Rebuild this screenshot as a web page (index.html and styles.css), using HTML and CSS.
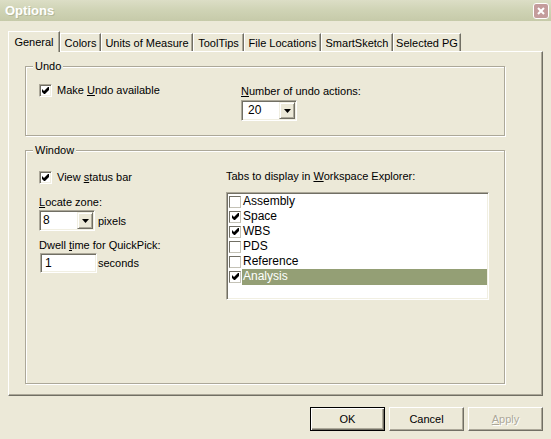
FILE: index.html
```html
<!DOCTYPE html>
<html>
<head>
<meta charset="utf-8">
<link rel="stylesheet" href="styles.css">
</head>
<body>
<div class="titlebar">
  <span class="title">Options</span>
  <span class="close"><svg width="8" height="8" viewBox="0 0 8 8"><path d="M1 1L7 7M7 1L1 7" stroke="#fff" stroke-width="2"/></svg></span>
</div>
<div class="main">
  <div class="tabs">
    <div class="tab active t-general">General</div>
    <div class="tab t-colors">Colors</div>
    <div class="tab t-units">Units of Measure</div>
    <div class="tab t-tips">ToolTips</div>
    <div class="tab t-files">File Locations</div>
    <div class="tab t-sketch">SmartSketch</div>
    <div class="tab t-pg">Selected PG</div>
  </div>
  <div class="panel">
    <div class="group undo">
      <span class="legend">Undo</span>
      <div class="undo-inner">
        <div class="undo-left">
          <div class="check-row">
            <span class="checkbox"><svg class="tick" width="7" height="7" viewBox="0 0 7 7"><polygon points="0,2 2,4 6,0 7,0 7,3 3,7 2,7 0,5" fill="#000"/></svg></span>
            <span>Make <u>U</u>ndo available</span>
          </div>
        </div>
        <div class="undo-right">
          <div class="field-label"><u>N</u>umber of undo actions:</div>
          <div class="combo combo-undo">
            <span class="combo-value wide">20</span>
            <span class="drop"><svg width="7" height="4" viewBox="0 0 7 4"><polygon points="0,0 7,0 3.5,4" fill="#000"/></svg></span>
          </div>
        </div>
      </div>
    </div>
    <div class="group window">
      <span class="legend">Window</span>
      <div class="window-inner">
        <div class="win-left">
          <div class="check-row">
            <span class="checkbox"><svg class="tick" width="7" height="7" viewBox="0 0 7 7"><polygon points="0,2 2,4 6,0 7,0 7,3 3,7 2,7 0,5" fill="#000"/></svg></span>
            <span>View <u>s</u>tatus bar</span>
          </div>
          <div class="field-label locate-label"><u>L</u>ocate zone:</div>
          <div class="field-row">
            <div class="combo">
              <span class="combo-value">8</span>
              <span class="drop"><svg width="7" height="4" viewBox="0 0 7 4"><polygon points="0,0 7,0 3.5,4" fill="#000"/></svg></span>
            </div>
            <span class="unit">pixels</span>
          </div>
          <div class="field-label dwell-label">Dwell <u>t</u>ime for QuickPick:</div>
          <div class="field-row">
            <div class="textbox">1</div>
            <span class="unit unit-sec">seconds</span>
          </div>
        </div>
        <div class="win-right">
          <div class="field-label">Tabs to display in <u>W</u>orkspace Explorer:</div>
          <div class="listbox">
            <div class="list-row"><span class="lcheck"></span><span class="item">Assembly</span></div>
            <div class="list-row"><span class="lcheck"><svg class="tick" width="7" height="7" viewBox="0 0 7 7"><polygon points="0,2 2,4 6,0 7,0 7,3 3,7 2,7 0,5" fill="#000"/></svg></span><span class="item">Space</span></div>
            <div class="list-row"><span class="lcheck"><svg class="tick" width="7" height="7" viewBox="0 0 7 7"><polygon points="0,2 2,4 6,0 7,0 7,3 3,7 2,7 0,5" fill="#000"/></svg></span><span class="item">WBS</span></div>
            <div class="list-row"><span class="lcheck"></span><span class="item">PDS</span></div>
            <div class="list-row"><span class="lcheck"></span><span class="item">Reference</span></div>
            <div class="list-row"><span class="lcheck"><svg class="tick" width="7" height="7" viewBox="0 0 7 7"><polygon points="0,2 2,4 6,0 7,0 7,3 3,7 2,7 0,5" fill="#000"/></svg></span><span class="item selected">Analysis</span></div>
          </div>
        </div>
      </div>
    </div>
  </div>
  <div class="buttons">
    <div class="btn default">OK</div>
    <div class="btn">Cancel</div>
    <div class="btn disabled"><u>A</u>pply</div>
  </div>
</div>
</body>
</html>
```
FILE: styles.css
```css
* { box-sizing: border-box; }
html, body { margin: 0; padding: 0; }
body {
  width: 551px;
  height: 439px;
  overflow: hidden;
  background: #ECE9D8;
  font-family: "Liberation Sans", Arial, sans-serif;
  font-size: 11px;
  color: #000;
}
u { text-decoration: underline; text-underline-offset: 1px; }

.titlebar {
  height: 21px;
  background: linear-gradient(to bottom, #dcdec6 0%, #d0d4b6 45%, #c6caa9 100%);
  display: flex;
  align-items: center;
  justify-content: space-between;
  padding: 0 2px 0 5px;
}
.title {
  color: #fff;
  font-weight: bold;
  font-size: 13px;
  text-shadow: 1px 1px 0 #b4b898;
}
.close {
  width: 16px;
  height: 16px;
  border: 1px solid #fff;
  border-radius: 3px;
  background: #c49c9c;
  display: flex;
  align-items: center;
  justify-content: center;
}

.main { padding: 10px 0 0 8px; }

.tabs {
  display: flex;
  align-items: flex-end;
  height: 20px;
}
.tab {
  height: 18px;
  background: #ECE9D8;
  border-top: 1px solid #fff;
  border-left: 1px solid #fff;
  border-right: 1px solid #716f64;
  box-shadow: inset -1px 0 0 #aca899;
  display: flex;
  align-items: center;
  justify-content: center;
  white-space: nowrap;
}
.tab.active {
  height: 21px;
  margin-bottom: -1px;
  position: relative;
  z-index: 1;
  padding-bottom: 1px;
}
.t-general { width: 52px; }
.t-colors { width: 41px; }
.t-units { width: 92px; }
.t-tips { width: 51px; }
.t-files { width: 77px; }
.t-sketch { width: 72px; }
.t-pg { width: 68px; }

.panel {
  width: 535px;
  height: 345px;
  border-top: 1px solid #fff;
  border-left: 1px solid #fff;
  border-right: 1px solid #716f64;
  border-bottom: 1px solid #716f64;
  box-shadow: inset -1px -1px 0 #aca899;
  padding: 14px 0 0 16px;
}

.group {
  position: relative;
  width: 480px;
  border: 1px solid #aca899;
  box-shadow: 1px 1px 0 #fff, inset 1px 1px 0 #fff;
}
.undo { height: 70px; margin-bottom: 14px; }
.window { height: 234px; }
.legend {
  position: absolute;
  top: -7px;
  left: 7px;
  padding: 0 2px;
  background: #ECE9D8;
  line-height: 13px;
}

.undo-inner { display: flex; padding: 17px 0 0 13px; }
.undo-left { width: 202px; }
.window-inner { display: flex; padding: 20px 0 0 13px; }
.win-left { width: 187px; }
.win-right { margin-top: -1px; }

.check-row {
  display: flex;
  align-items: center;
  gap: 5px;
  height: 13px;
  line-height: 13px;
}
.checkbox {
  width: 13px;
  height: 13px;
  background: #fff;
  border: 1px solid;
  border-color: #aca899 #fff #fff #aca899;
  box-shadow: inset 1px 1px 0 #716f64, inset -1px -1px 0 #f1efe2;
  display: flex;
  align-items: center;
  justify-content: center;
}
.tick { display: block; }

.field-label { line-height: 13px; white-space: nowrap; }
.undo-right .field-label { margin-top: 1px; }
.combo-undo { margin-top: 2px; }
.locate-label { margin-top: 12px; }
.dwell-label { margin-top: 8px; }
.field-row { display: flex; align-items: center; margin-top: 1px; }

.combo {
  width: 56px;
  height: 21px;
  background: #fff;
  border: 1px solid;
  border-color: #aca899 #fff #fff #aca899;
  box-shadow: inset 1px 1px 0 #716f64, inset -1px -1px 0 #f1efe2;
  padding: 1px;
  display: flex;
}
.combo-value {
  flex: 1;
  line-height: 17px;
  padding-left: 2px;
  font-size: 12px;
}
.combo-value.wide { padding-left: 5px; }
.drop {
  width: 16px;
  height: 17px;
  background: #ECE9D8;
  border: 1px solid;
  border-color: #f1efe2 #716f64 #716f64 #f1efe2;
  box-shadow: inset 1px 1px 0 #fff, inset -1px -1px 0 #aca899;
  display: flex;
  align-items: center;
  justify-content: center;
}
.unit { margin-left: 3px; }
.unit-sec { margin-left: 1px; }

.textbox {
  width: 57px;
  height: 20px;
  margin-left: 1px;
  background: #fff;
  border: 1px solid;
  border-color: #aca899 #fff #fff #aca899;
  box-shadow: inset 1px 1px 0 #716f64, inset -1px -1px 0 #f1efe2;
  padding-left: 4px;
  line-height: 18px;
  font-size: 12px;
}

.listbox {
  margin-top: 9px;
  width: 263px;
  height: 108px;
  background: #fff;
  border: 1px solid;
  border-color: #aca899 #fff #fff #aca899;
  box-shadow: inset 1px 1px 0 #716f64, inset -1px -1px 0 #f1efe2;
  padding: 1px;
}
.list-row {
  display: flex;
  align-items: center;
  height: 15px;
  padding-left: 1px;
}
.lcheck {
  width: 12px;
  height: 12px;
  border: 1px solid;
  border-color: #716f64 #c4c2b6 #c4c2b6 #716f64;
  background: #fff;
  display: flex;
  align-items: center;
  justify-content: center;
  flex: none;
}
.item {
  margin-left: 1px;
  padding-left: 1px;
  height: 15px;
  line-height: 15px;
  flex: 1;
  font-size: 12px;
}
.item.selected { background: #949f75; color: #fff; height: 16px; }

.buttons {
  display: flex;
  justify-content: flex-end;
  gap: 4px;
  margin-top: 11px;
  padding-right: 8px;
}
.btn {
  width: 75px;
  height: 24px;
  display: flex;
  align-items: center;
  justify-content: center;
  background: #ECE9D8;
  border: 1px solid;
  border-color: #fff #716f64 #716f64 #fff;
  box-shadow: inset -1px -1px 0 #aca899;
}
.btn.default {
  border-color: #000;
  box-shadow: inset 1px 1px 0 #fff, inset -1px -1px 0 #716f64, inset -2px -2px 0 #aca899;
}
.btn.disabled {
  color: #aca899;
  text-shadow: 1px 1px 0 #fff;
}
```
